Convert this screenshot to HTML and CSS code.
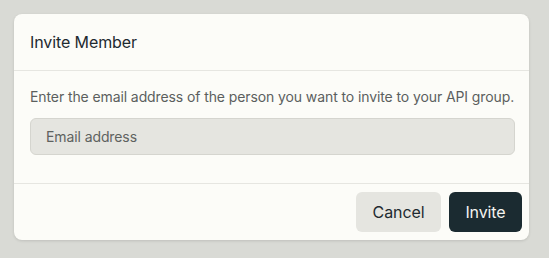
FILE: index.html
```html
<!DOCTYPE html>
<html>
<head>
<meta charset="utf-8">
<link rel="stylesheet" href="styles.css">
</head>
<body>
<div class="dialog">
  <div class="dialog-header">Invite Member</div>
  <div class="dialog-body">
    <p class="desc">Enter the email address of the person you want to invite to your API group.</p>
    <input class="email" type="text" placeholder="Email address">
  </div>
  <div class="dialog-footer">
    <button class="btn btn-secondary">Cancel</button>
    <button class="btn btn-primary">Invite</button>
  </div>
</div>
</body>
</html>
```
FILE: styles.css
```css
html, body {
  margin: 0;
  padding: 0;
}
body {
  background: #d9dad5;
  padding: 14px 20px 18px 14px;
  font-family: Inter, "Noto Sans", sans-serif;
  color: #1e2a30;
}
.dialog {
  width: 515px;
  background: #fcfcf8;
  border-radius: 8px;
  box-shadow: 0 1px 3px rgba(0,0,0,0.12);
  box-sizing: border-box;
}
.dialog-header {
  height: 56px;
  display: flex;
  align-items: center;
  padding: 0 16px;
  font-size: 16px;
  letter-spacing: -0.1px;
  color: #1e2a30;
  border-bottom: 1px solid #e6e6e1;
}
.dialog-body {
  padding: 16px 14px 28px 16px;
  border-bottom: 1px solid #e6e6e1;
}
.desc {
  margin: 0 0 11px 0;
  font-size: 14px;
  line-height: 20px;
  letter-spacing: -0.1px;
  color: #5b5f5e;
  white-space: nowrap;
}
.email {
  display: block;
  width: 100%;
  box-sizing: border-box;
  height: 37px;
  padding: 0 15px;
  background: #e5e5e0;
  border: 1px solid #d5d5cf;
  border-radius: 6px;
  font-family: inherit;
  font-size: 14px;
  letter-spacing: -0.1px;
  color: #1e2a30;
  outline: none;
}
.email::placeholder {
  color: #5e625f;
}
.dialog-footer {
  display: flex;
  justify-content: flex-end;
  gap: 8px;
  padding: 8px 7px 8px 16px;
}
.btn {
  height: 40px;
  border: none;
  border-radius: 6px;
  font-family: inherit;
  font-size: 16px;
  letter-spacing: -0.1px;
  padding: 0;
}
.btn-secondary {
  width: 85px;
  background: #e5e5e0;
  color: #1e2a30;
}
.btn-primary {
  width: 73px;
  background: #1b2b31;
  color: #f4f4f0;
}
```
